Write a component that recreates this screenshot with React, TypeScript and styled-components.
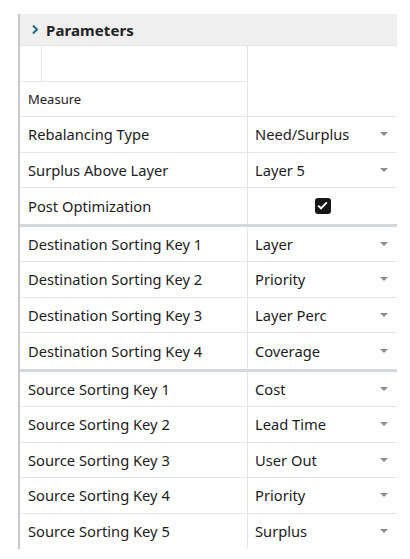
import React from "react";
import styled, { createGlobalStyle } from "styled-components";

const Global = createGlobalStyle`
  html, body { margin: 0; padding: 0; background: #ffffff; }
  body { font-family: "Noto Sans", "Open Sans", sans-serif; color: #1f1f1f; }
`;

const Page = styled.div`
  padding: 14px 13px 0 18px;
`;

const Panel = styled.section`
  width: 379px;
  border-left: 2px solid #c9c9c9;
  box-sizing: border-box;
`;

const Header = styled.div`
  height: 32px;
  background: #efefef;
  border-bottom: 1px solid #e4e4e4;
  box-sizing: border-box;
  display: flex;
  align-items: center;
  gap: 7px;
  padding-left: 11px;
`;

const Title = styled.span`
  font-size: 15px;
  font-weight: 700;
  color: #222;
  letter-spacing: 0.1px;
`;

const Grid = styled.div`
  display: grid;
  grid-template-columns: 227px 150px;
`;

const Cell = styled.div<{ $h?: number; $right?: boolean; $last?: boolean; $span?: number }>`
  height: ${(p) => p.$h ?? 35.5}px;
  box-sizing: border-box;
  border-bottom: ${(p) => (p.$last ? "none" : "1px solid #e6e6e6")};
  border-left: ${(p) => (p.$right ? "1px solid #e3e3e3" : "none")};
  grid-row: ${(p) => (p.$span ? `span ${p.$span}` : "auto")};
  display: flex;
  align-items: center;
  padding-left: ${(p) => (p.$right ? "7px" : "8px")};
  padding-right: 9px;
  font-size: 14.7px;
  color: #1c1c1c;
`;

const TopCell = styled.div`
  height: 35.5px;
  box-sizing: border-box;
  border-bottom: 1px solid #e6e6e6;
  display: flex;
`;

const Stub = styled.div`
  width: 21px;
  border-right: 1px solid #e6e6e6;
`;

const SmallLabel = styled.span`
  font-size: 13px;
`;

const Value = styled.span`
  flex: 1;
`;

const Separator = styled.div`
  grid-column: 1 / span 2;
  height: 3px;
  background: #d2d8dc;
`;

const Caret = styled.span`
  width: 0;
  height: 0;
  border-left: 4px solid transparent;
  border-right: 4px solid transparent;
  border-top: 4px solid #8c8c8c;
`;

const CheckWrap = styled.div`
  flex: 1;
  display: flex;
  justify-content: center;
  padding-left: 2px;
`;

const CheckBox = styled.span`
  width: 16px;
  height: 16px;
  border-radius: 3px;
  background: #161616;
  display: flex;
  align-items: center;
  justify-content: center;
`;

const Chevron = () => (
  <svg width="8" height="11" viewBox="0 0 8 11">
    <path d="M2 1.5 L6 5.5 L2 9.5" fill="none" stroke="#1d6a8a" strokeWidth="2" />
  </svg>
);

type Row = { label: string; value: string };

const groupA: Row[] = [
  { label: "Rebalancing Type", value: "Need/Surplus" },
  { label: "Surplus Above Layer", value: "Layer 5" },
];

const groupB: Row[] = [
  { label: "Destination Sorting Key 1", value: "Layer" },
  { label: "Destination Sorting Key 2", value: "Priority" },
  { label: "Destination Sorting Key 3", value: "Layer Perc" },
  { label: "Destination Sorting Key 4", value: "Coverage" },
];

const groupC: Row[] = [
  { label: "Source Sorting Key 1", value: "Cost" },
  { label: "Source Sorting Key 2", value: "Lead Time" },
  { label: "Source Sorting Key 3", value: "User Out" },
  { label: "Source Sorting Key 4", value: "Priority" },
  { label: "Source Sorting Key 5", value: "Surplus" },
];

const SelectRow = ({ row, last }: { row: Row; last?: boolean }) => (
  <>
    <Cell $last={last}>{row.label}</Cell>
    <Cell $right $last={last}>
      <Value>{row.value}</Value>
      <Caret />
    </Cell>
  </>
);

export default function App() {
  return (
    <>
      <Global />
      <Page>
        <Panel>
          <Header>
            <Chevron />
            <Title>Parameters</Title>
          </Header>
          <Grid>
            <TopCell>
              <Stub />
            </TopCell>
            <Cell $right $span={2} $h={71} />
            <Cell $h={35.5}>
              <SmallLabel>Measure</SmallLabel>
            </Cell>
            {groupA.map((r) => (
              <SelectRow key={r.label} row={r} />
            ))}
            <Cell $last>Post Optimization</Cell>
            <Cell $right $last>
              <CheckWrap>
                <CheckBox>
                  <svg width="11" height="9" viewBox="0 0 11 9">
                    <path d="M1.2 4.6 L4 7.3 L9.8 1.4" fill="none" stroke="#ffffff" strokeWidth="1.9" />
                  </svg>
                </CheckBox>
              </CheckWrap>
            </Cell>
            <Separator />
            {groupB.map((r, i) => (
              <SelectRow key={r.label} row={r} last={i === groupB.length - 1} />
            ))}
            <Separator />
            {groupC.map((r, i) => (
              <SelectRow key={r.label} row={r} last={i === groupC.length - 1} />
            ))}
          </Grid>
        </Panel>
      </Page>
    </>
  );
}
